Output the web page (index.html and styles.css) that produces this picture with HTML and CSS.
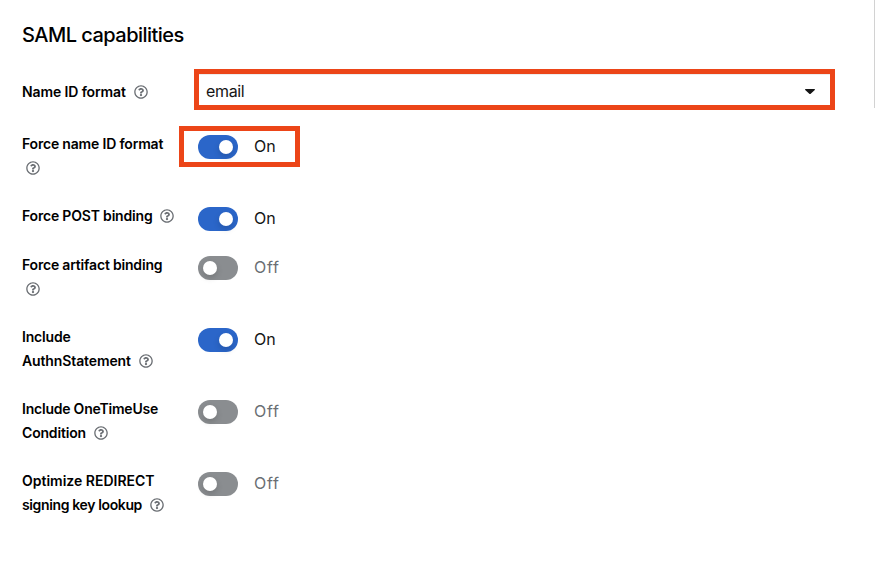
FILE: index.html
```
<!DOCTYPE html>
<html lang="en">
<head>
<meta charset="utf-8">
<title>SAML capabilities</title>
<link rel="stylesheet" href="styles.css">
</head>
<body>
<svg width="0" height="0" class="defs"><symbol id="help" viewBox="0 0 512 512"><path d="M256 8C119.043 8 8 119.083 8 256c0 136.997 111.043 248 248 248s248-111.003 248-248C504 119.083 392.957 8 256 8zm0 448c-110.532 0-200-89.431-200-200 0-110.495 89.472-200 200-200 110.491 0 200 89.471 200 200 0 110.53-89.431 200-200 200zm107.244-255.2c0 67.052-72.421 68.084-72.421 92.863V300c0 6.627-5.373 12-12 12h-45.647c-6.627 0-12-5.373-12-12v-8.659c0-35.745 27.1-50.034 47.579-61.516 17.561-9.845 28.324-16.541 28.324-29.579 0-17.246-21.999-28.693-39.784-28.693-23.189 0-33.894 10.977-48.942 29.969-4.057 5.12-11.46 6.071-16.666 2.124l-27.824-21.098c-5.107-3.872-6.251-11.066-2.644-16.363C184.846 131.491 214.94 112 261.794 112c49.071 0 101.45 38.304 101.45 88.8zM298 368c0 23.159-18.841 42-42 42s-42-18.841-42-42 18.841-42 42-42 42 18.841 42 42z"/></symbol></svg>
<main class="panel">
  <h1><span>SAML capabilities</span></h1>
  <form class="form">
    <div class="row row-select">
      <div class="label"><div class="line"><span class="t-name">Name ID format</span><svg class="help"><use href="#help"/></svg></div></div>
      <div class="select"><span class="value">email</span><svg class="caret" viewBox="0 0 10 5"><path d="M.7 0h8.6c.6 0 .9.7.5 1.1L5.7 4.7a1 1 0 0 1-1.4 0L.2 1.1C-.2.7.1 0 .7 0z"/></svg></div>
    </div>
    <div class="row">
      <div class="label"><div class="line"><span class="t-force">Force name ID format</span></div><div class="line wrapped"><svg class="help"><use href="#help"/></svg></div></div>
      <div class="control marked"><span class="switch on"></span><span class="state">On</span></div>
    </div>
    <div class="row row-post">
      <div class="label"><div class="line"><span class="t-post">Force POST binding</span><svg class="help"><use href="#help"/></svg></div></div>
      <div class="control"><span class="switch on"></span><span class="state">On</span></div>
    </div>
    <div class="row">
      <div class="label"><div class="line"><span class="t-artifact">Force artifact binding</span></div><div class="line wrapped"><svg class="help"><use href="#help"/></svg></div></div>
      <div class="control"><span class="switch"></span><span class="state off">Off</span></div>
    </div>
    <div class="row">
      <div class="label"><div class="line"><span class="t-include">Include</span></div><div class="line"><span class="t-authn">AuthnStatement</span><svg class="help"><use href="#help"/></svg></div></div>
      <div class="control"><span class="switch on"></span><span class="state">On</span></div>
    </div>
    <div class="row">
      <div class="label"><div class="line"><span class="t-once">Include OneTimeUse</span></div><div class="line"><span class="t-condition">Condition</span><svg class="help"><use href="#help"/></svg></div></div>
      <div class="control"><span class="switch"></span><span class="state off">Off</span></div>
    </div>
    <div class="row">
      <div class="label"><div class="line"><span class="t-redirect">Optimize REDIRECT</span></div><div class="line"><span class="t-lookup">signing key lookup</span><svg class="help"><use href="#help"/></svg></div></div>
      <div class="control"><span class="switch"></span><span class="state off">Off</span></div>
    </div>
  </form>
</main>
<aside class="rail"></aside>
</body>
</html>
```
FILE: styles.css
```
*, *::before, *::after { box-sizing: border-box; }
body {
  margin: 0;
  height: 572px;
  display: flex;
  background: #fff;
  color: #151515;
  font-family: Inter, "Liberation Sans", sans-serif;
  overflow: hidden;
}
.defs { position: absolute; }
.panel { width: 874px; padding: 20px 0 0 22px; }
.rail { width: 1px; height: 108px; background: #d2d2d2; }
h1 {
  margin: 0;
  height: 30px;
  font-size: 20px;
  line-height: 30px;
  font-weight: 500;
  letter-spacing: -0.53px;
  color: #000;
}
.form { padding-top: 19px; }
.row {
  display: grid;
  grid-template-columns: 176px 1fr;
  align-items: start;
  height: 72px;
}
.row-select { grid-template-columns: 172px 641px; height: 63px; }
.row-post { height: 49px; }
.row-select .label { padding-top: 11px; }
.line {
  display: flex;
  align-items: center;
  height: 24px;
  font-size: 14px;
  font-weight: 600;
  color: #000;
  white-space: nowrap;
}
.line span { padding-bottom: 2px; }
.t-name, .t-authn { letter-spacing: -0.12px; }
.t-force, .t-post, .t-artifact, .t-include { letter-spacing: -0.19px; }
.t-once { letter-spacing: -0.22px; }
.t-condition { letter-spacing: -0.18px; }
.t-lookup { letter-spacing: -0.37px; }
.wrapped { padding-left: 4px; }
.help { width: 14px; height: 14px; fill: #6a6e73; flex: none; }
.line span + .help { margin-left: 8px; }
.select {
  display: flex;
  align-items: center;
  justify-content: space-between;
  height: 41px;
  padding: 3px 15px 0 7px;
  border: 5px solid #ec4518;
  font-size: 16px;
  box-shadow: inset 0 1px #ededed;
}
.value { letter-spacing: -0.35px; }
.caret { width: 10px; height: 5px; fill: #151515; }
.control {
  position: relative;
  display: flex;
  align-items: center;
  height: 24px;
  margin-top: 3px;
  font-size: 16px;
}
.marked::after {
  content: "";
  position: absolute;
  left: -19px;
  top: -9px;
  width: 121px;
  height: 41px;
  border: 5px solid #ec4518;
}
.switch {
  width: 40px;
  height: 24px;
  margin-right: 16px;
  padding: 5px;
  border-radius: 12px;
  background: #8a8d90;
}
.switch::before {
  content: "";
  display: block;
  width: 14px;
  height: 14px;
  border-radius: 50%;
  background: #fff;
  box-shadow: 0 3px 6px rgba(0, 0, 0, 0.16);
}
.switch.on { background: #2b66c9; padding-left: 21px; }
.state { padding-bottom: 2px; }
.off { color: #6a6e73; letter-spacing: 0.7px; }
```
